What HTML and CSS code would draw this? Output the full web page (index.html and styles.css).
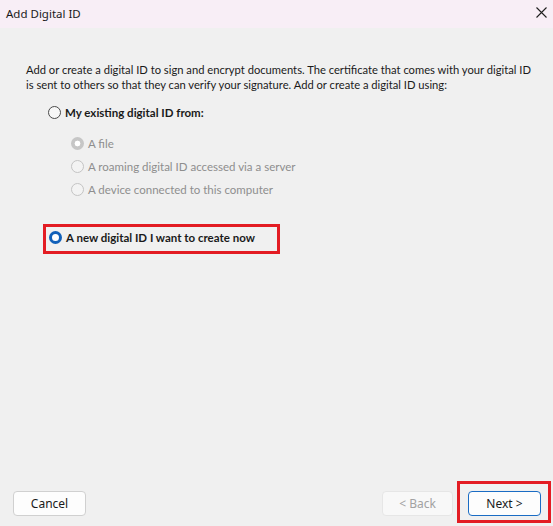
FILE: index.html
```html
<!DOCTYPE html>
<html lang="en">
<head>
<meta charset="utf-8">
<title>Add Digital ID</title>
<link rel="stylesheet" href="styles.css">
</head>
<body>
<div class="dialog">
  <header class="titlebar">
    <span class="title">Add Digital ID</span>
    <svg class="close" width="11" height="11" viewBox="0 0 11 11" aria-hidden="true">
      <path d="M0.5 0.5 L10.5 10.5 M10.5 0.5 L0.5 10.5" stroke="#1f1f1f" stroke-width="1.1" fill="none"/>
    </svg>
  </header>
  <main class="content">
    <p class="intro">Add or create a digital ID to sign and encrypt documents. The certificate that comes with your digital ID is sent to others so that they can verify your signature. Add or create a digital ID using:</p>
    <div class="option main-opt">
      <span class="radio"></span>
      <span class="label bold">My existing digital ID from:</span>
    </div>
    <div class="suboptions">
      <div class="option sub">
        <span class="radio disabled checked"></span>
        <span class="label muted">A file</span>
      </div>
      <div class="option sub">
        <span class="radio disabled"></span>
        <span class="label muted">A roaming digital ID accessed via a server</span>
      </div>
      <div class="option sub">
        <span class="radio disabled"></span>
        <span class="label muted">A device connected to this computer</span>
      </div>
    </div>
    <div class="highlight">
      <div class="option">
        <span class="radio selected"></span>
        <span class="label bold">A new digital ID I want to create now</span>
      </div>
    </div>
  </main>
  <footer class="footer">
    <button class="btn cancel">Cancel</button>
    <div class="right">
      <button class="btn back" disabled>&lt; Back</button>
      <div class="highlight-btn">
        <button class="btn next">Next &gt;</button>
      </div>
    </div>
  </footer>
</div>
</body>
</html>
```
FILE: styles.css
```css
html, body {
  margin: 0;
  padding: 0;
}
body {
  width: 553px;
  height: 526px;
  background: #f0f0f0;
  overflow: hidden;
}
.dialog {
  width: 553px;
  height: 526px;
  display: flex;
  flex-direction: column;
}
.titlebar {
  height: 28px;
  flex: none;
  background: #f8eef6;
  display: flex;
  align-items: center;
  justify-content: space-between;
  padding: 0 6px 0 6px;
  box-sizing: border-box;
}
.title {
  font-family: "Noto Sans", sans-serif;
  font-size: 11.5px;
  color: #1a1a1a;
  margin-top: -2px;
}
.close {
  margin-right: 0;
  margin-top: -4px;
}
.content {
  flex: 1;
  padding: 0 15px 0 26px;
  font-family: "Lato", sans-serif;
  font-size: 11.5px;
  color: #1a1a1a;
}
.intro {
  margin: 34px 0 0 0;
  line-height: 15px;
  font-size: 11.2px;
}
.option {
  display: flex;
  align-items: center;
  height: 16px;
}
.main-opt {
  margin-top: 12px;
  margin-left: 22px;
}
.suboptions {
  margin-left: 45px;
  margin-top: 15px;
  display: flex;
  flex-direction: column;
  gap: 7px;
}
.radio {
  width: 13px;
  height: 13px;
  box-sizing: border-box;
  border-radius: 50%;
  border: 1px solid #4a4a4a;
  background: #f7f7f7;
  flex: none;
  margin-right: 4px;
}
.radio.disabled {
  border-color: #c4c4c4;
  background: #f3f3f3;
}
.radio.disabled.checked {
  border: none;
  background: radial-gradient(circle, #ffffff 0 2.6px, #c6c6c6 3.2px);
}
.radio.selected {
  border: 3.5px solid #1160b9;
  background: #ffffff;
  margin-right: 4px;
}
.label {
  white-space: nowrap;
}
.bold {
  font-weight: bold;
}
.muted {
  color: #8e8e8e;
}
.highlight {
  margin-top: 27px;
  margin-left: 17px;
  width: 237px;
  height: 30px;
  box-sizing: border-box;
  border: 3px solid #e31c23;
  padding: 2px 0 0 3px;
}
.footer {
  flex: none;
  display: flex;
  justify-content: space-between;
  align-items: flex-start;
  padding: 0 2px 3px 13px;
}
.right {
  display: flex;
  align-items: flex-start;
  gap: 4px;
}
.btn {
  font-family: "Noto Sans", sans-serif;
  font-size: 12px;
  height: 25px;
  border-radius: 4px;
  border: 1px solid #d0d0d0;
  background: #fdfdfd;
  color: #1a1a1a;
  padding: 0;
  margin: 0;
  box-sizing: border-box;
}
.cancel {
  width: 73px;
  margin-top: 10px;
}
.back {
  width: 71px;
  margin-top: 10px;
  background: #f8f8f8;
  border-color: #e6e6e6;
  color: #a2a2a2;
}
.highlight-btn {
  width: 94px;
  height: 42px;
  box-sizing: border-box;
  border: 3px solid #e31c23;
  padding: 7px 0 0 8px;
}
.next {
  width: 73px;
  border-color: #1a6cc4;
}
```
